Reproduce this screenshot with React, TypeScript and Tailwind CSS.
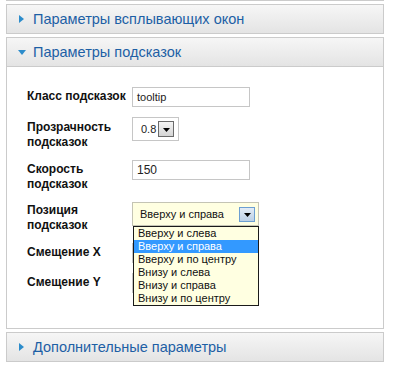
import React from 'react';

function Arrow({ open }: { open?: boolean }) {
  return open ? (
    <svg width="8" height="5" viewBox="0 0 8 5" className="ml-[11px] mr-[7px]">
      <polygon points="0,0 8,0 4,5" fill="#2c8ccb" />
    </svg>
  ) : (
    <svg width="5" height="8" viewBox="0 0 5 8" className="ml-[12px] mr-[9px]">
      <polygon points="0,0 5,4 0,8" fill="#2c8ccb" />
    </svg>
  );
}

function PanelHeader({ title, open }: { title: string; open?: boolean }) {
  return (
    <div className="mt-[3px] flex h-[30px] items-center border border-[#cbcbcb] bg-gradient-to-b from-[#f6f6f6] to-[#e4e4e4]">
      <Arrow open={open} />
      <span className="text-[14.5px] leading-none text-[#1d5fa5]">{title}</span>
    </div>
  );
}

function DropButton({ blue }: { blue?: boolean }) {
  return (
    <div
      className={
        blue
          ? 'flex h-[15px] w-[16px] items-end justify-center border border-[#6c9fd2] bg-gradient-to-b from-[#e3ecf6] to-[#bcd0e6] pb-[4px]'
          : 'flex h-[16px] w-[16px] items-end justify-center border border-[#6a6a6a] bg-gradient-to-b from-[#f4f4f4] to-[#d4d4d4] pb-[4px]'
      }
    >
      <svg width="7" height="4" viewBox="0 0 7 4">
        <polygon points="0,0 7,0 3.5,4" fill="#000" />
      </svg>
    </div>
  );
}

const positions = [
  'Вверху и слева',
  'Вверху и справа',
  'Вверху и по центру',
  'Внизу и слева',
  'Внизу и справа',
  'Внизу и по центру',
];

export default function App() {
  return (
    <div className="h-[379px] w-[395px] overflow-hidden bg-white font-['Liberation_Sans',Arial,sans-serif]">
      <div className="ml-[6px] w-[378px]">
        <div className="h-px bg-[#cbcbcb]" />

        <PanelHeader title="Параметры всплывающих окон" />
        <PanelHeader title="Параметры подсказок" open />

        <div className="h-[262px] border-x border-b border-[#cbcbcb] bg-white pl-[20px] pt-[20px] text-[12px] text-[#111]">
          <div className="flex h-[31px] items-start">
            <div className="mt-[2px] w-[105px] font-bold leading-[15px]">Класс подсказок</div>
            <div className="flex h-[20px] w-[118px] items-center border border-[#c6c6c6] pl-[4px] text-[11px] text-[#222]">
              tooltip
            </div>
          </div>

          <div className="flex h-[42px] items-start">
            <div className="mt-[2px] w-[105px] font-bold leading-[15px]">
              Прозрачность
              <br />
              подсказок
            </div>
            <div className="-mt-[1px] flex h-[24px] w-[47px] items-center border border-[#c6c6c6] pl-[8px] text-[11px] text-[#222]">
              <span className="w-[16px]">0.8</span>
              <div className="ml-[1px]">
                <DropButton />
              </div>
            </div>
          </div>

          <div className="flex h-[42px] items-start">
            <div className="mt-[2px] w-[105px] font-bold leading-[15px]">
              Скорость
              <br />
              подсказок
            </div>
            <div className="flex h-[20px] w-[118px] items-center border border-[#c6c6c6] pl-[4px] text-[12px] text-[#222]">
              150
            </div>
          </div>

          <div className="flex h-[41px] items-start">
            <div className="mt-[1px] w-[105px] font-bold leading-[15px]">
              Позиция
              <br />
              подсказок
            </div>
            <div className="relative z-10 flex h-[24px] w-[127px] items-center justify-between border border-[#c4c4b4] bg-[#ffffe1] pl-[7px] pr-[3px] text-[11px] text-[#111]">
              <span>Вверху и справа</span>
              <DropButton blue />
              <div className="absolute left-0 top-[23px] w-[126px] border border-[#1a1a1a] bg-[#ffffe1] text-[11px]">
                {positions.map((p) => (
                  <div
                    key={p}
                    className={
                      p === 'Вверху и справа'
                        ? 'h-[13px] bg-[#3399ff] pl-[4px] leading-[13px] text-white'
                        : 'h-[13px] pl-[4px] leading-[13px] text-[#111]'
                    }
                  >
                    {p}
                  </div>
                ))}
              </div>
            </div>
          </div>

          <div className="flex h-[30px] items-start">
            <div className="mt-[2px] w-[105px] font-bold leading-[15px]">Смещение X</div>
            <div className="h-[20px] w-[118px] border border-[#c6c6c6]" />
          </div>

          <div className="flex h-[30px] items-start">
            <div className="mt-[2px] w-[105px] font-bold leading-[15px]">Смещение Y</div>
            <div className="h-[20px] w-[118px] border border-[#c6c6c6]" />
          </div>
        </div>

        <PanelHeader title="Дополнительные параметры" />
      </div>
    </div>
  );
}
